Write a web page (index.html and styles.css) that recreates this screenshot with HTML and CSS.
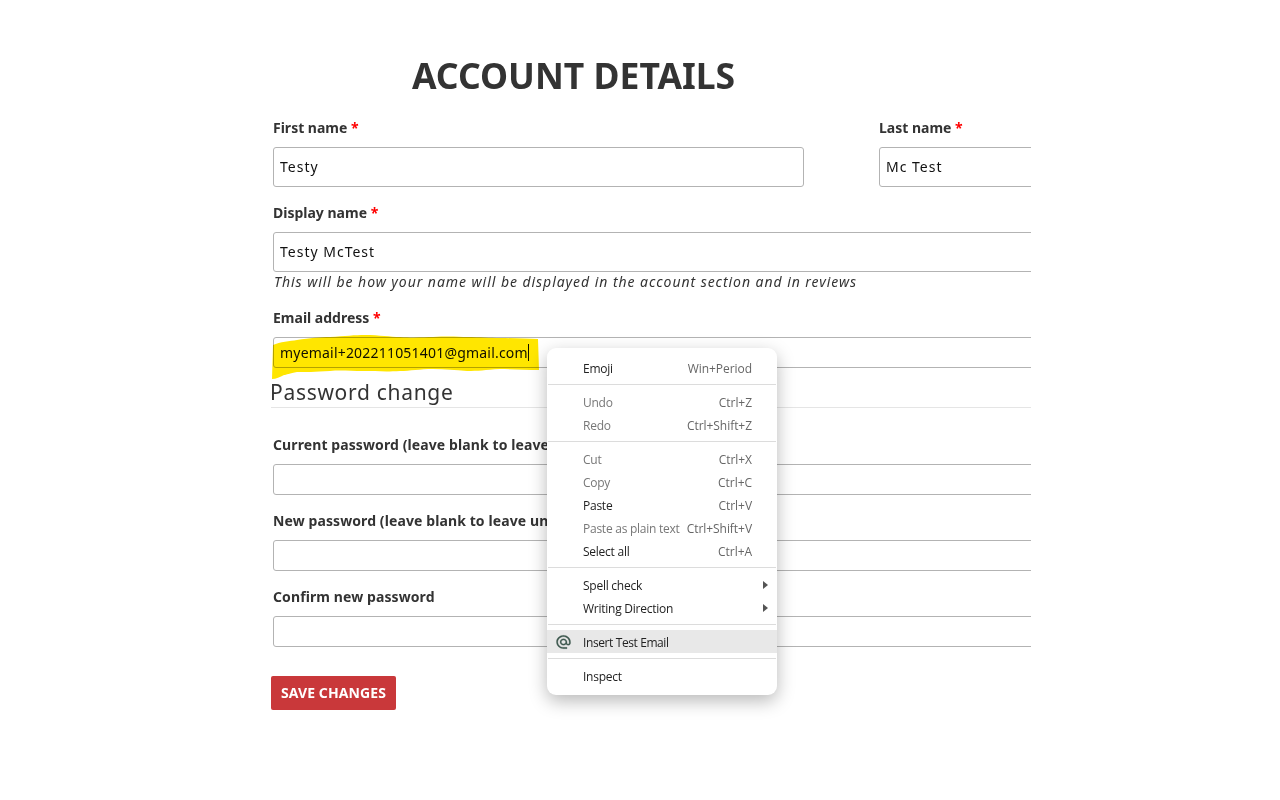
FILE: index.html
```html
<!DOCTYPE html>
<html lang="en">
<head>
<meta charset="utf-8">
<title>Account details</title>
<link rel="stylesheet" href="styles.css">
</head>
<body>
<main class="page">
  <h1 class="title">ACCOUNT DETAILS</h1>
  <form class="form">
    <div class="row">
      <div class="group half">
        <div class="label">First name <span class="req">*</span></div>
        <div class="input tall">Testy</div>
      </div>
      <div class="group rest">
        <div class="label">Last name <span class="req">*</span></div>
        <div class="input tall">Mc Test</div>
      </div>
    </div>
    <div class="group">
      <div class="label">Display name <span class="req">*</span></div>
      <div class="input tall">Testy McTest</div>
      <div class="hint">This will be how your name will be displayed in the account section and in reviews</div>
    </div>
    <div class="group email">
      <div class="label">Email address <span class="req">*</span></div>
      <div class="input short email-input"><span class="caret">myemail+202211051401@gmail.com</span></div>
    </div>
    <h2 class="section">Password change</h2>
    <div class="group pw first">
      <div class="label">Current password (leave blank to leave unchanged)</div>
      <div class="input short"></div>
    </div>
    <div class="group pw">
      <div class="label">New password (leave blank to leave unchanged)</div>
      <div class="input short"></div>
    </div>
    <div class="group pw">
      <div class="label">Confirm new password</div>
      <div class="input short"></div>
    </div>
    <button class="save" type="button">SAVE CHANGES</button>
  </form>
</main>

<svg class="marker" width="290" height="60" viewBox="0 0 290 60" aria-hidden="true">
  <path fill="#ffe600" d="M3 10 C10 7 20 6 27 5 C40 3 50 2 60 2 C75 1 85 0 95 0 C110 0 120 2 130 2 C145 3 155 2 163 2 C180 1 190 2 197 2 C210 2 220 3 230 3 C245 3 258 4 268 4 L269 35 C255 35 240 34 230 34 C215 35 208 36 197 36 C185 35 175 34 163 34 C150 34 140 36 130 36 C115 37 105 36 94 36 C80 36 70 35 60 36 C45 37 35 37 27 37 C20 38 16 40 14 40 C10 42 6 44 2 44 Z"/>
</svg>

<div class="menu">
  <div class="item"><span class="text">Emoji</span><span class="key">Win+Period</span></div>
  <div class="sep"></div>
  <div class="item off"><span class="text">Undo</span><span class="key">Ctrl+Z</span></div>
  <div class="item off"><span class="text">Redo</span><span class="key">Ctrl+Shift+Z</span></div>
  <div class="sep"></div>
  <div class="item off"><span class="text">Cut</span><span class="key">Ctrl+X</span></div>
  <div class="item off"><span class="text">Copy</span><span class="key">Ctrl+C</span></div>
  <div class="item"><span class="text">Paste</span><span class="key">Ctrl+V</span></div>
  <div class="item off"><span class="text">Paste as plain text</span><span class="key">Ctrl+Shift+V</span></div>
  <div class="item"><span class="text">Select all</span><span class="key">Ctrl+A</span></div>
  <div class="sep"></div>
  <div class="item"><span class="text">Spell check</span><i class="arrow"></i></div>
  <div class="item"><span class="text">Writing Direction</span><i class="arrow"></i></div>
  <div class="sep before-hover"></div>
  <div class="item hover">
    <svg class="at" width="17" height="16" viewBox="0 0 24 24" preserveAspectRatio="none" aria-hidden="true"><path fill="#3f5a50" stroke="#3f5a50" stroke-width=".35" d="M12 2C6.48 2 2 6.48 2 12s4.48 10 10 10h5v-2h-5c-4.34 0-8-3.66-8-8s3.66-8 8-8 8 3.66 8 8v1.43c0 .79-.71 1.57-1.5 1.57s-1.5-.78-1.5-1.57V12c0-2.76-2.24-5-5-5s-5 2.24-5 5 2.24 5 5 5c1.38 0 2.64-.56 3.54-1.47.65.89 1.77 1.47 2.96 1.47 1.97 0 3.5-1.6 3.5-3.57V12c0-5.52-4.48-10-10-10zm0 13c-1.66 0-3-1.34-3-3s1.34-3 3-3 3 1.34 3 3-1.34 3-3 3z"/></svg>
    <span class="tight">Insert Test Email</span>
  </div>
  <div class="sep after-hover"></div>
  <div class="item"><span class="text">Inspect</span></div>
</div>
</body>
</html>
```

FILE: styles.css
```css
* { box-sizing: border-box; }
html, body { margin: 0; padding: 0; background: #fff; }
body { height: 800px; overflow: hidden; position: relative; font-family: "Noto Sans", sans-serif; color: #333; }

.page { width: 760px; margin-left: 271px; overflow: hidden; padding-top: 49px; }
.title { margin: 0 0 17px; padding-left: 141px; font-family: "Noto Sans", sans-serif; font-size: 35.5px; line-height: 52px; font-weight: 700; color: #333; }

.form { padding-left: 2px; width: 1000px; }
.row { display: flex; gap: 75px; }
.group { margin-bottom: 16px; }
.half { width: 531px; flex: none; }
.rest { width: 400px; flex: none; }
.label { font-size: 14px; line-height: 20px; font-weight: 700; color: #333; margin-bottom: 9px; }
.req { color: #f00; }
.input { border: 1px solid #b3b3b3; border-radius: 3px; padding: 0 6px; font-size: 14px; letter-spacing: 1px; color: #111; display: flex; align-items: center; background: #fff; }
.tall { height: 40px; padding-bottom: 2px; }
.short { height: 31px; }
.email-input { letter-spacing: .2px; }
.hint { font-size: 14px; line-height: 20px; font-style: italic; letter-spacing: .95px; padding-left: 1px; color: #333; }
.caret { border-right: 1px solid #111; line-height: 17px; }
.email { margin-bottom: 0; }
.section { margin: 10px 0 0 -3px; border-bottom: 1px solid #e5e5e5; font-size: 21px; line-height: 27px; padding-top: 1px; padding-bottom: 1px; font-weight: 400; letter-spacing: .7px; color: #333; }
.pw { margin-bottom: 16px; }
.pw .label { letter-spacing: .1px; }
.first { margin-top: 27px; }
.save { display: block; margin: 29px 0 0 -2px; width: 125px; height: 34px; border: 0; border-radius: 2px; background: #c9383a; color: #fff; font-family: "Noto Sans", sans-serif; font-size: 14px; font-weight: 700; letter-spacing: .1px; padding: 0 0 2px; }

.marker { position: absolute; left: 270px; top: 335px; mix-blend-mode: multiply; }

.menu { position: absolute; left: 547px; top: 348px; width: 230px; height: 347px; padding: 9px 1px 7px; background: #fff; border-radius: 9px; box-shadow: 0 6px 18px rgba(0,0,0,.28); font-family: "Open Sans", sans-serif; font-size: 12px; color: #222; }
.item { height: 23px; display: flex; align-items: center; justify-content: space-between; padding: 0 24px 0 35px; position: relative; letter-spacing: -.1px; }
.text { letter-spacing: -.25px; }
.off { color: #777; }
.key { color: #666; letter-spacing: -.05px; }
.sep { height: 1px; background: #dcdcdc; margin: 4px 0 6px; }
.before-hover { margin-bottom: 5px; }
.after-hover { margin-top: 5px; }
.hover { background: #e8e8e8; margin: 0 -1px; padding-left: 36px; padding-top: 2px; }
.tight { letter-spacing: -.4px; }
.arrow { position: absolute; right: 8px; top: 7px; width: 0; height: 0; border-left: 5px solid #555; border-top: 4px solid transparent; border-bottom: 4px solid transparent; }
.at { position: absolute; left: 8px; top: 4px; }
```
